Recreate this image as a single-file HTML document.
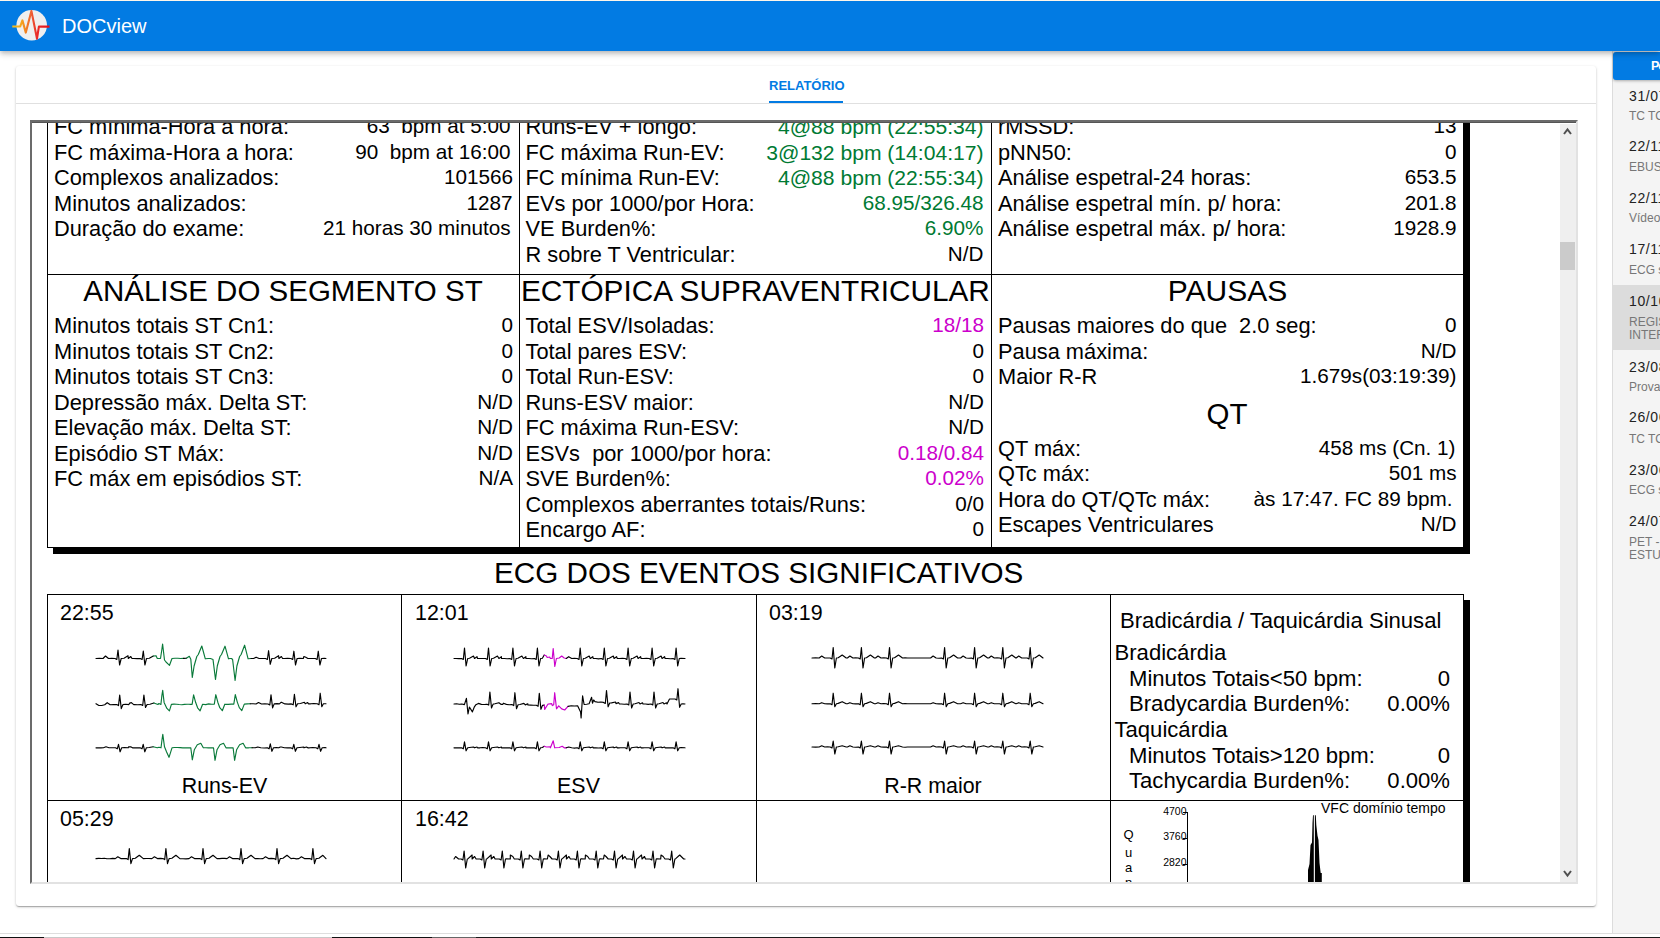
<!DOCTYPE html>
<html><head><meta charset="utf-8">
<style>
*{box-sizing:border-box}
html,body{margin:0;padding:0;width:1660px;height:938px;overflow:hidden;background:#fff;font-family:"Liberation Sans",sans-serif}
.abs{position:absolute}
#hdr{position:absolute;left:0;top:0;width:1660px;height:51px;background:#027be3;box-shadow:0 2px 4px -1px rgba(0,0,0,.16),0 4px 5px rgba(0,0,0,.11),0 1px 10px rgba(0,0,0,.1);z-index:5}
#hdr .topline{position:absolute;left:0;top:0;width:1660px;height:1px;background:#fdf6ea}
#brand{position:absolute;left:62px;top:15.5px;font-size:20px;line-height:1;color:#fff}
#card{position:absolute;left:16px;top:66px;width:1580px;height:840px;background:#fff;border-radius:3px;box-shadow:0 1px 3px rgba(0,0,0,.2),0 1px 1px rgba(0,0,0,.14),0 2px 1px -1px rgba(0,0,0,.12)}
#tabline{position:absolute;left:16px;top:103px;width:1580px;height:1px;background:#e0e0e0}
#tab{position:absolute;left:769px;top:79px;font-size:13px;font-weight:bold;line-height:1;color:#027be3;white-space:nowrap}
#tabul{position:absolute;left:769px;top:101px;width:74px;height:2px;background:#027be3}
#frame{position:absolute;left:30px;top:120px;width:1548px;height:764px;border:2px solid;border-color:#6b6b6b #e2e2e2 #e2e2e2 #6b6b6b;overflow:hidden;background:#fff}
#inner{position:absolute;left:-32px;top:-122px;width:1660px;height:938px}
.t{position:absolute;line-height:1;white-space:pre;color:#000}
.r{text-align:right}
.c{text-align:center}
.hl{position:absolute;background:#000}
#sb{position:absolute;left:1560px;top:124px;width:16px;height:758px;background:#efefef}
#thumb{position:absolute;left:1560px;top:242px;width:15px;height:28px;background:#cbcbcb}
#side{position:absolute;left:1612px;top:51px;width:48px;height:883px;background:#f4f4f4;border-left:1px solid #dcdcdc}
#sidehdr{position:absolute;left:1613px;top:52px;width:60px;height:28px;background:#027be3;border-radius:3px 0 0 3px;box-shadow:0 1px 3px rgba(0,0,0,.3)}
.sd{position:absolute;left:1629px;font-size:14px;line-height:1;color:#222;white-space:nowrap;letter-spacing:0.6px}
.ss{position:absolute;left:1629px;font-size:12px;line-height:1;color:#777;white-space:nowrap}
#bottomline{position:absolute;left:0;top:933px;width:1660px;height:1px;background:#dedede}
#taskbar{position:absolute;left:0;top:937px;width:1660px;height:1px;background:linear-gradient(to right,#111 0,#111 44px,#c8c8c8 44px,#c8c8c8 332px,#111 332px,#111 432px,#666 432px,#666 476px,#1a1a1a 476px,#1a1a1a 100%)}
</style></head><body>
<div id="hdr"><div class="topline"></div>
<svg class="abs" style="left:11px;top:9px" width="40" height="32" viewBox="11 9 40 32">
<defs><linearGradient id="lg" x1="12" y1="0" x2="50" y2="0" gradientUnits="userSpaceOnUse"><stop offset="0" stop-color="#f7c41a"/><stop offset="0.26" stop-color="#f5a21d"/><stop offset="0.37" stop-color="#f17f22"/><stop offset="0.5" stop-color="#ee6233"/><stop offset="0.66" stop-color="#ea2a28"/><stop offset="1" stop-color="#e3101b"/></linearGradient></defs>
<circle cx="31.7" cy="25.3" r="15.3" fill="#efefef"/>
<polyline points="12.3,26.5 20.2,26.5 22.4,20.4 25.8,32.6 31.4,10.9 37,38.7 38.9,26.6 49.5,26.6" fill="none" stroke="url(#lg)" stroke-width="2.1" stroke-linejoin="round"/>
</svg>
<div id="brand">DOCview</div>
</div>
<div id="card"></div>
<div id="tab">RELATÓRIO</div>
<div id="tabline"></div>
<div id="tabul"></div>
<div id="frame"><div id="inner">
<!-- table 1 -->
<div class="abs" style="left:47px;top:60px;width:1417px;height:488px;border:1px solid #000;box-shadow:6px 6px 0 0 #000"></div>
<div class="hl" style="left:519px;top:60px;width:1px;height:488px"></div>
<div class="hl" style="left:991px;top:60px;width:1px;height:488px"></div>
<div class="hl" style="left:47px;top:274px;width:1417px;height:1px"></div>
<!-- table 2 -->
<div class="abs" style="left:47px;top:594px;width:1417px;height:500px;border:1px solid #000;box-shadow:6px 6px 0 0 #000"></div>
<div class="hl" style="left:401px;top:594px;width:1px;height:500px"></div>
<div class="hl" style="left:756px;top:594px;width:1px;height:500px"></div>
<div class="hl" style="left:1110px;top:594px;width:1px;height:500px"></div>
<div class="hl" style="left:47px;top:800px;width:1417px;height:1px"></div>
<div class="t" style="left:54px;top:116px;font-size:21.8px;">FC mínima-Hora a hora:</div>
<div class="t r" style="right:1149.5px;top:116px;font-size:20.7px;">63  bpm at 5:00</div>
<div class="t" style="left:54px;top:141.5px;font-size:21.8px;">FC máxima-Hora a hora:</div>
<div class="t r" style="right:1149.5px;top:141.5px;font-size:20.7px;">90  bpm at 16:00</div>
<div class="t" style="left:54px;top:167px;font-size:21.8px;">Complexos analizados:</div>
<div class="t r" style="right:1147px;top:167px;font-size:20.7px;">101566</div>
<div class="t" style="left:54px;top:192.5px;font-size:21.8px;">Minutos analizados:</div>
<div class="t r" style="right:1147.5px;top:192.5px;font-size:20.7px;">1287</div>
<div class="t" style="left:54px;top:218px;font-size:21.8px;">Duração do exame:</div>
<div class="t r" style="right:1149.5px;top:218px;font-size:20.7px;">21 horas 30 minutos</div>
<div class="t" style="left:525.5px;top:116px;font-size:21.8px;">Runs-EV + longo:</div>
<div class="t r" style="right:676.5px;top:116px;font-size:21.1px;color:#007a33;">4@88 bpm (22:55:34)</div>
<div class="t" style="left:525.5px;top:141.5px;font-size:21.8px;">FC máxima Run-EV:</div>
<div class="t r" style="right:676.5px;top:141.5px;font-size:21.1px;color:#007a33;">3@132 bpm (14:04:17)</div>
<div class="t" style="left:525.5px;top:167px;font-size:21.8px;">FC mínima Run-EV:</div>
<div class="t r" style="right:676.5px;top:167px;font-size:21.1px;color:#007a33;">4@88 bpm (22:55:34)</div>
<div class="t" style="left:525.5px;top:192.5px;font-size:21.8px;">EVs por 1000/por Hora:</div>
<div class="t r" style="right:676.5px;top:192.5px;font-size:20.7px;color:#007a33;">68.95/326.48</div>
<div class="t" style="left:525.5px;top:218px;font-size:21.8px;">VE Burden%:</div>
<div class="t r" style="right:676.5px;top:218px;font-size:20.7px;color:#007a33;">6.90%</div>
<div class="t" style="left:525.5px;top:243.5px;font-size:21.8px;">R sobre T Ventricular:</div>
<div class="t r" style="right:676.5px;top:243.5px;font-size:20.7px;">N/D</div>
<div class="t" style="left:998px;top:116px;font-size:21.8px;">rMSSD:</div>
<div class="t r" style="right:203.5px;top:116px;font-size:20.7px;">13</div>
<div class="t" style="left:998px;top:141.5px;font-size:21.8px;">pNN50:</div>
<div class="t r" style="right:203.5px;top:141.5px;font-size:20.7px;">0</div>
<div class="t" style="left:998px;top:167px;font-size:21.8px;">Análise espetral-24 horas:</div>
<div class="t r" style="right:203.5px;top:167px;font-size:20.7px;">653.5</div>
<div class="t" style="left:998px;top:192.5px;font-size:21.8px;">Análise espetral mín. p/ hora:</div>
<div class="t r" style="right:203.5px;top:192.5px;font-size:20.7px;">201.8</div>
<div class="t" style="left:998px;top:218px;font-size:21.8px;">Análise espetral máx. p/ hora:</div>
<div class="t r" style="right:203.5px;top:218px;font-size:20.7px;">1928.9</div>
<div class="t c" style="left:-117px;width:800px;top:276px;font-size:29.5px">ANÁLISE DO SEGMENTO ST</div>
<div class="t c" style="left:355.4px;width:800px;top:276px;font-size:29.75px">ECTÓPICA SUPRAVENTRICULAR</div>
<div class="t c" style="left:827.5px;width:800px;top:276px;font-size:30px">PAUSAS</div>
<div class="t" style="left:54px;top:315.0px;font-size:21.8px;">Minutos totais ST Cn1:</div>
<div class="t r" style="right:1147px;top:315.0px;font-size:20.7px;">0</div>
<div class="t" style="left:54px;top:340.5px;font-size:21.8px;">Minutos totais ST Cn2:</div>
<div class="t r" style="right:1147px;top:340.5px;font-size:20.7px;">0</div>
<div class="t" style="left:54px;top:366.0px;font-size:21.8px;">Minutos totais ST Cn3:</div>
<div class="t r" style="right:1147px;top:366.0px;font-size:20.7px;">0</div>
<div class="t" style="left:54px;top:391.5px;font-size:21.8px;">Depressão máx. Delta ST:</div>
<div class="t r" style="right:1147px;top:391.5px;font-size:20.7px;">N/D</div>
<div class="t" style="left:54px;top:417.0px;font-size:21.8px;">Elevação máx. Delta ST:</div>
<div class="t r" style="right:1147px;top:417.0px;font-size:20.7px;">N/D</div>
<div class="t" style="left:54px;top:442.5px;font-size:21.8px;">Episódio ST Máx:</div>
<div class="t r" style="right:1147px;top:442.5px;font-size:20.7px;">N/D</div>
<div class="t" style="left:54px;top:468.0px;font-size:21.8px;">FC máx em episódios ST:</div>
<div class="t r" style="right:1147px;top:468.0px;font-size:20.7px;">N/A</div>
<div class="t" style="left:525.5px;top:315.0px;font-size:21.8px;">Total ESV/Isoladas:</div>
<div class="t r" style="right:676px;top:315.0px;font-size:20.7px;color:#cc00cc;">18/18</div>
<div class="t" style="left:525.5px;top:340.5px;font-size:21.8px;">Total pares ESV:</div>
<div class="t r" style="right:676px;top:340.5px;font-size:20.7px;">0</div>
<div class="t" style="left:525.5px;top:366.0px;font-size:21.8px;">Total Run-ESV:</div>
<div class="t r" style="right:676px;top:366.0px;font-size:20.7px;">0</div>
<div class="t" style="left:525.5px;top:391.5px;font-size:21.8px;">Runs-ESV maior:</div>
<div class="t r" style="right:676px;top:391.5px;font-size:20.7px;">N/D</div>
<div class="t" style="left:525.5px;top:417.0px;font-size:21.8px;">FC máxima Run-ESV:</div>
<div class="t r" style="right:676px;top:417.0px;font-size:20.7px;">N/D</div>
<div class="t" style="left:525.5px;top:442.5px;font-size:21.8px;">ESVs  por 1000/por hora:</div>
<div class="t r" style="right:676px;top:442.5px;font-size:20.7px;color:#cc00cc;">0.18/0.84</div>
<div class="t" style="left:525.5px;top:468.0px;font-size:21.8px;">SVE Burden%:</div>
<div class="t r" style="right:676px;top:468.0px;font-size:20.7px;color:#cc00cc;">0.02%</div>
<div class="t" style="left:525.5px;top:493.5px;font-size:21.8px;">Complexos aberrantes totais/Runs:</div>
<div class="t r" style="right:676px;top:493.5px;font-size:20.7px;">0/0</div>
<div class="t" style="left:525.5px;top:519.0px;font-size:21.8px;">Encargo AF:</div>
<div class="t r" style="right:676px;top:519.0px;font-size:20.7px;">0</div>
<div class="t" style="left:998px;top:315.0px;font-size:21.8px;">Pausas maiores do que  2.0 seg:</div>
<div class="t r" style="right:203.5px;top:315.0px;font-size:20.7px;">0</div>
<div class="t" style="left:998px;top:340.5px;font-size:21.8px;">Pausa máxima:</div>
<div class="t r" style="right:203.5px;top:340.5px;font-size:20.7px;">N/D</div>
<div class="t" style="left:998px;top:366.0px;font-size:21.8px;">Maior R-R</div>
<div class="t r" style="right:203.5px;top:366.0px;font-size:20.7px;">1.679s(03:19:39)</div>
<div class="t c" style="left:827px;width:800px;top:399px;font-size:29.5px">QT</div>
<div class="t" style="left:998px;top:437.5px;font-size:21.8px;">QT máx:</div>
<div class="t r" style="right:204.5px;top:437.5px;font-size:20.7px;">458 ms (Cn. 1)</div>
<div class="t" style="left:998px;top:463px;font-size:21.8px;">QTc máx:</div>
<div class="t r" style="right:203.5px;top:463px;font-size:20.7px;">501 ms</div>
<div class="t" style="left:998px;top:488.5px;font-size:21.8px;">Hora do QT/QTc máx:</div>
<div class="t r" style="right:207.5px;top:488.5px;font-size:20.7px;">às 17:47. FC 89 bpm.</div>
<div class="t" style="left:998px;top:514px;font-size:21.8px;">Escapes Ventriculares</div>
<div class="t r" style="right:203.5px;top:514px;font-size:20.7px;">N/D</div>
<div class="t c" style="left:358.65px;width:800px;top:558px;font-size:29.65px">ECG DOS EVENTOS SIGNIFICATIVOS</div>
<div class="t" style="left:60px;top:603px;font-size:21.4px;">22:55</div>
<div class="t" style="left:415px;top:603px;font-size:21.4px;">12:01</div>
<div class="t" style="left:769px;top:603px;font-size:21.4px;">03:19</div>
<div class="t" style="left:60px;top:809px;font-size:21.4px;">05:29</div>
<div class="t" style="left:415px;top:809px;font-size:21.4px;">16:42</div>
<div class="t c" style="left:-175.5px;width:800px;top:776px;font-size:21.4px">Runs-EV</div>
<div class="t c" style="left:178.5px;width:800px;top:776px;font-size:21.4px">ESV</div>
<div class="t c" style="left:533px;width:800px;top:776px;font-size:21.4px">R-R maior</div>
<div class="t" style="left:1120px;top:609.9px;font-size:22.1px;">Bradicárdia / Taquicárdia Sinusal</div>
<div class="t" style="left:1114.5px;top:641.9px;font-size:22.1px;">Bradicárdia</div>
<div class="t" style="left:1129px;top:667.8px;font-size:22.1px;">Minutos Totais&lt;50 bpm:</div>
<div class="t r" style="right:210px;top:667.8px;font-size:22.1px;">0</div>
<div class="t" style="left:1129px;top:692.8px;font-size:22.1px;">Bradycardia Burden%:</div>
<div class="t r" style="right:210px;top:692.8px;font-size:22.1px;">0.00%</div>
<div class="t" style="left:1114.5px;top:718.6px;font-size:22.1px;">Taquicárdia</div>
<div class="t" style="left:1129px;top:745.1px;font-size:22.1px;">Minutos Totais&gt;120 bpm:</div>
<div class="t r" style="right:210px;top:745.1px;font-size:22.1px;">0</div>
<div class="t" style="left:1129px;top:769.7px;font-size:22.1px;">Tachycardia Burden%:</div>
<div class="t r" style="right:210px;top:769.7px;font-size:22.1px;">0.00%</div>
<div class="t r" style="right:473.5px;top:805.7px;font-size:10.5px;">4700</div>
<div class="t r" style="right:473.5px;top:830.7px;font-size:10.5px;">3760</div>
<div class="t r" style="right:473.5px;top:856.7px;font-size:10.5px;">2820</div>
<div class="hl" style="left:1187px;top:812px;width:1px;height:80px"></div>
<div class="hl" style="left:1183px;top:812px;width:5px;height:1px"></div>
<div class="hl" style="left:1183px;top:838px;width:5px;height:1px"></div>
<div class="hl" style="left:1183px;top:864px;width:5px;height:1px"></div>
<div class="t c" style="left:728.5px;width:800px;top:827.8px;font-size:13px">Q</div>
<div class="t c" style="left:728.5px;width:800px;top:845.6px;font-size:13px">u</div>
<div class="t c" style="left:728.5px;width:800px;top:860.7px;font-size:13px">a</div>
<div class="t c" style="left:728.5px;width:800px;top:876px;font-size:13px">n</div>
<div class="t" style="left:1321px;top:800.9px;font-size:14px;">VFC domínio tempo</div>
<svg class="abs" style="left:0;top:0" width="1660" height="938"><polygon fill="#000" points="1308,890 1308,870 1309.5,864 1310.5,845 1312,842.6 1312.5,823 1313,815.2 1313.8,815.2 1313.8,890"/><polygon fill="#000" points="1314.9,890 1314.9,815.2 1315.8,815.2 1316.3,825 1317.5,835.8 1318.5,840 1319.5,863 1320.7,873 1321.8,873 1321.8,890"/></svg>
<svg class="abs" style="left:0;top:0" width="1660" height="938"><polyline points="96,658.5 99.5,658.4 103,658.5 105.5,656.0 108.5,658.5 111.8,658.3 115,658.5 116.8,659.5 118,650.0 119.6,665.0 121.2,658.5 124,658.2 128,655.7 128.3,658.5 130.8,656.5 132,658.5 133.8,658.5 137.1,658.6 140.3,658.5 142.1,659.5 143.3,651.0 144.9,665.0 146.5,658.5 149.3,658.2 153.3,656.0" fill="none" stroke="#000" stroke-width="1.15" stroke-linejoin="round" stroke-linecap="round"/><polyline points="153.3,656.0 156,655.7 157.3,658.5 158.5,658.5 160.5,658.5 162,648.5 162.6,644.0 164.5,660.0 166,662.0 169.5,665.3 172,658.5 175,658.2 177.9,658.2 180.7,658.5 183.6,658.4" fill="none" stroke="#0a7a3a" stroke-width="1.15" stroke-linejoin="round" stroke-linecap="round"/><polyline points="183.6,658.4 186.4,658.2" fill="none" stroke="#000" stroke-width="1.15" stroke-linejoin="round" stroke-linecap="round"/><polyline points="186.4,658.2 189.3,656.3 190.8,659.3 192.3,677.5 194.1,666.0 196.8,656.5 198.3,654.5 201.8,646.0 205.3,658.8 208.3,658.5 210.5,658.5 213.0,659.5 215.5,679.5 217.3,666.0 220.0,656.5 221.5,654.5 225.0,646.2 228.5,658.8 230.1,658.5 231.5,658.5 232.6,659.5 235.1,680.5 236.9,666.0 239.6,656.5 241.1,654.5 244.6,645.2 248.1,658.8 251.1,658.5" fill="none" stroke="#0a7a3a" stroke-width="1.15" stroke-linejoin="round" stroke-linecap="round"/><polyline points="251.1,658.5 253.6,658.5 256.1,657.2 259.1,658.5 262.4,658.5 265.6,658.5 267.4,659.5 268.6,650.7 270.2,664.3 271.8,658.5 274.6,658.2 278.6,655.7 278.9,658.5 281.4,656.5 282.6,658.5 284.4,658.5 287.6,658.2 290.9,658.5 292.7,659.5 293.9,651.2 295.5,665.0 297.1,658.5 299.9,658.2 303.3,658.5 303.9,656.5 305.8,657.3 307.9,658.5 308.8,658.5 312.1,658.5 315.3,658.5 317.1,659.5 318.3,651.2 319.9,665.0 321.5,658.5 324.3,658.2 326,658.5" fill="none" stroke="#000" stroke-width="1.15" stroke-linejoin="round" stroke-linecap="round"/><polyline points="96,703.7 98.9,705.5 101.8,705.5 104.7,704.7 107.2,702.7 110.2,704.7 113.5,704.6 116.7,704.6 118.5,705.6 119.7,695.1 121.3,708.6 122.9,704.6 125.7,704.3 128.9,704.6 129.7,703.1 131.4,702.6 133.7,704.6 134.4,704.6 137.7,704.8 140.9,704.5 142.7,705.5 143.9,695.0 145.5,707.5 147.1,704.5 149.9,704.2 153.9,703.0" fill="none" stroke="#000" stroke-width="1.15" stroke-linejoin="round" stroke-linecap="round"/><polyline points="153.9,703.0 157.9,704.5 158.9,703.5 160.9,704.4 161.9,695.4 162.7,690.4 164.1,702.4 166.9,708.4 169.4,710.9 171.4,704.4 174.0,704.1 176.6,704.2 179.2,704.5 181.8,704.7 184.4,704.4 187.0,704.2 189.6,704.3 192.1,704.3 193.6,694.8 195.6,702.3 197.6,707.8 200.1,710.8 202.6,704.3 205.7,704.6 208.7,703.9 211.8,704.2 214.3,704.2 215.8,694.7 217.8,702.2 219.8,707.7 222.3,710.7 224.8,704.2 228.1,704.4 231.3,704.1 233.8,704.1 235.3,694.6 237.3,702.1 239.3,707.6 241.8,710.6 244.3,704.1 247.2,703.9 250.2,703.8" fill="none" stroke="#0a7a3a" stroke-width="1.15" stroke-linejoin="round" stroke-linecap="round"/><polyline points="250.2,703.8 253.1,703.7 256,704.0 258.5,702.5 261.5,704.0 264.8,703.8 268,704.0 269.8,705.0 271,694.9 272.6,707.9 274.2,703.9 277,703.6 279.4,703.9 281,702.4 281.9,702.4 284.9,703.9 285,703.9 288.2,704.1 291.4,703.9 293.2,704.8 294.4,694.3 296.0,706.8 297.6,703.8 300.4,703.5 304.4,702.3 305.2,703.8 307.7,702.6 308.4,703.8 310.7,703.8 313.9,703.5 317.2,703.7 319.0,704.7 320.2,693.2 321.8,706.7 323.4,703.7 326,703.7" fill="none" stroke="#000" stroke-width="1.15" stroke-linejoin="round" stroke-linecap="round"/><polyline points="96,747.8 98.5,747.8 101.0,747.9 103.5,747.8 106.0,746.8 109.0,747.8 112.2,747.7 115.5,747.8 117.3,748.8 118.5,744.3 120.1,751.8 121.7,747.8 124.5,747.5 128.2,747.8 128.5,746.8 130.7,746.8 132.5,747.8 133.7,747.8 136.9,747.8 140.2,747.8 142.0,748.8 143.2,744.3 144.8,751.8 146.4,747.8 149.2,747.5 153.2,746.8" fill="none" stroke="#000" stroke-width="1.15" stroke-linejoin="round" stroke-linecap="round"/><polyline points="153.2,746.8 157.2,747.8 159,747.3 161,747.8 162,739.8 162.8,734.3 164.5,746.8 166.5,751.8 169,757.3 172,747.8 174.7,747.5 177.4,747.5 180.2,747.6 182.9,747.9 185.6,747.8 188.3,747.8 190.8,747.8 192.3,759.8 194.3,749.8 197.3,744.8 200.8,743.3 203.3,747.8 205.9,747.7 208.4,747.9 211,747.8 213.5,747.8 215,760.3 217,749.8 220,744.8 223.5,743.3 226,747.8 230.6,747.8 233.1,747.8 234.6,760.3 236.6,749.8 239.6,744.8 243.1,743.3 245.6,747.8 248.8,747.8 252.1,747.7" fill="none" stroke="#0a7a3a" stroke-width="1.15" stroke-linejoin="round" stroke-linecap="round"/><polyline points="252.1,747.7 255.3,747.8 257.8,747.0 260.8,747.8 264.1,748.0 267.3,747.8 269.1,748.8 270.3,743.8 271.9,751.3 273.5,747.8 276.3,747.5 278.8,747.8 280.3,747.0 281.3,747.0 284.3,747.8 284.3,747.8 287.6,747.9 290.8,747.8 292.6,748.8 293.8,744.3 295.4,751.3 297.0,747.8 299.8,747.5 303.8,747.0 304,747.8 306.5,747.0 307.8,747.8 309.5,747.8 312.8,747.6 316,747.8 317.8,748.8 319,744.3 320.6,751.3 322.2,747.8 325,747.5 326,747.8" fill="none" stroke="#000" stroke-width="1.15" stroke-linejoin="round" stroke-linecap="round"/><polyline points="454,658.5 456.0,658.5 458.8,658.6 461.5,658.5 463.3,659.5 464.5,648.0 466.1,666.0 467.7,658.5 469.5,658.2 473.5,656.0 474.5,658.5 477.0,656.7 477.5,658.5 480.0,658.5 482.8,658.5 485.5,658.5 487.3,659.5 488.5,648.0 490.1,666.0 491.7,658.5 493.5,658.2 497.5,656.0 498.9,658.5 501.4,656.7 501.5,658.5 504.4,658.5 507.1,658.8 509.9,658.5 511.7,659.5 512.9,648.0 514.5,666.0 516.1,658.5 517.9,658.2 521.9,656.0 523.4,658.5 525.9,656.7 525.9,658.5 528.9,658.5 531.6,658.7 534.4,658.5 536.2,659.5 537.4,648.0 539.0,666.0 540.6,658.5 542.4,658.2 544.2,655.0" fill="none" stroke="#000" stroke-width="1.15" stroke-linejoin="round" stroke-linecap="round"/><polyline points="544.2,655.0 546.4,656.0 547.2,657.5 549.7,657.0 550.4,658.5 552.2,658.5 553.2,648.5 554.8,666.5 556.4,658.5 559.2,658.0 561.7,656.0 564.2,658.0 566.2,658.5" fill="none" stroke="#cc00cc" stroke-width="1.15" stroke-linejoin="round" stroke-linecap="round"/><polyline points="566.2,658.5 568.7,656.7 571.7,658.5 574.5,658.3 577.2,658.5 579.0,659.5 580.2,648.0 581.8,666.0 583.4,658.5 585.2,658.2 589.2,656.0 590.3,658.5 592.8,656.7 593.2,658.5 595.8,658.5 598.5,658.9 601.3,658.5 603.1,659.5 604.3,648.0 605.9,666.0 607.5,658.5 609.3,658.2 613.3,656.0 614.1,658.5 616.6,656.7 617.3,658.5 619.6,658.5 622.4,658.2 625.1,658.5 626.9,659.5 628.1,648.0 629.7,666.0 631.3,658.5 633.1,658.2 637.1,656.0 638.1,658.5 640.6,656.7 641.1,658.5 643.6,658.5 646.4,658.4 649.1,658.5 650.9,659.5 652.1,648.0 653.7,666.0 655.3,658.5 657.1,658.2 661.1,656.0 662.1,658.5 664.6,656.7 665.1,658.5 667.6,658.5 670.4,658.7 673.1,658.5 674.9,659.5 676.1,648.0 677.7,666.0 679.3,658.5 681.1,658.2 685,658.5" fill="none" stroke="#000" stroke-width="1.15" stroke-linejoin="round" stroke-linecap="round"/><polyline points="454,704 456.6,703.8 459.2,704.3 461.8,704.0 464.4,704.6 466.4,698.3 468.0,713.9 469.4,707.0 472.4,711.9 474.4,706.8 475.9,704.7 478.4,703.4 481.4,704.4 484.1,704.5 486.9,704.2 488.7,705.1 489.9,692.0 491.5,708.0 493.1,704.1 494.9,703.8 498.9,702.7 500.9,704.3 502.9,704.3 503.4,703.2 506.4,704.4 509.1,704.8 511.9,704.6 513.7,705.6 514.9,692.7 516.5,708.7 518.1,704.7 519.9,704.5 523.9,703.4 525.3,704.9 527.8,703.8 527.9,705.0 530.8,705.1 533.5,705.2 536.3,705.2 538.1,706.3 539.3,693.3 540.9,709.3 542.5,705.4 544.3,705.1" fill="none" stroke="#000" stroke-width="1.15" stroke-linejoin="round" stroke-linecap="round"/><polyline points="544.3,705.1 544.7,709.4 547.7,704.5 548.3,704.0 551.7,703.6 552.3,705.6 553.7,704.7 554.7,692.7 556.5,708.8 558.7,705.8 561.7,708.9 564.7,710.0 568.0,706.4" fill="none" stroke="#cc00cc" stroke-width="1.15" stroke-linejoin="round" stroke-linecap="round"/><polyline points="568.0,706.4 571.3,705.8 574.6,706.0 577.6,705.8 580.6,712.1 581.1,718.0 582.6,695.8 584.1,704.5 586.6,704.2 589.1,703.8 591.6,697.3 592.5,703.2 593.6,700.0 595.0,701.6 598.0,702.3 600.8,702.0 603.5,702.4 605.3,703.5 606.5,690.6 608.1,706.8 609.7,703.0 611.5,702.9 615.5,702.0 616,703.6 618.5,702.6 619.5,704.0 621.5,704.0 624.2,704.3 627,704.0 628.8,705.0 630,692.0 631.6,708.0 633.2,704.0 635,703.7 639,702.5 640,704.0 642.5,702.8 643,704.0 645.5,704.0 648.2,704.4 651,704.0 652.8,705.0 654,692.0 655.6,708.0 657.2,704.0 659,703.7 663,702.5 664,704.0 666.5,702.8 667,704.0 669.5,699.0 672.2,699.0 675,699.0 676.8,700.0 678,688.7 679.6,707.3 681.2,704.0 683,703.7 685,704.0" fill="none" stroke="#000" stroke-width="1.15" stroke-linejoin="round" stroke-linecap="round"/><polyline points="454,747.8 456.0,747.8 458.8,747.9 461.5,747.8 463.3,748.8 464.5,741.8 466.1,750.8 467.7,747.8 469.5,747.5 473.5,747.0 474.5,747.8 477.0,747.0 477.5,747.8 480.0,747.8 482.8,747.5 485.5,747.8 487.3,748.8 488.5,741.8 490.1,750.8 491.7,747.8 493.5,747.5 497.5,747.0 498.9,747.8 501.4,747.0 501.5,747.8 504.4,747.8 507.1,747.9 509.9,747.8 511.7,748.8 512.9,741.8 514.5,750.8 516.1,747.8 517.9,747.5 521.9,747.0 523.4,747.8 525.9,747.0 525.9,747.8 528.9,747.8 531.6,747.9 534.4,747.8 536.2,748.8 537.4,741.8 539.0,750.8 540.6,747.8 542.4,747.5 544.2,746.3" fill="none" stroke="#000" stroke-width="1.15" stroke-linejoin="round" stroke-linecap="round"/><polyline points="544.2,746.3 546.4,747.0 550.2,746.8 550.4,747.8 553.2,740.8 554.7,747.8 559.2,747.5 562.2,746.3 564.2,747.8 566.2,747.8" fill="none" stroke="#cc00cc" stroke-width="1.15" stroke-linejoin="round" stroke-linecap="round"/><polyline points="566.2,747.8 568.7,747.0 571.7,747.8 574.5,748.1 577.2,747.8 579.0,748.8 580.2,741.8 581.8,750.8 583.4,747.8 585.2,747.5 589.2,747.0 590.3,747.8 592.8,747.0 593.2,747.8 595.8,747.8 598.5,748.0 601.3,747.8 603.1,748.8 604.3,741.8 605.9,750.8 607.5,747.8 609.3,747.5 613.3,747.0 614.1,747.8 616.6,747.0 617.3,747.8 619.6,747.8 622.4,747.7 625.1,747.8 626.9,748.8 628.1,741.8 629.7,750.8 631.3,747.8 633.1,747.5 637.1,747.0 638.1,747.8 640.6,747.0 641.1,747.8 643.6,747.8 646.4,747.7 649.1,747.8 650.9,748.8 652.1,741.8 653.7,750.8 655.3,747.8 657.1,747.5 661.1,747.0 662.1,747.8 664.6,747.0 665.1,747.8 667.6,747.8 670.4,747.9 673.1,747.8 674.9,748.8 676.1,741.8 677.7,750.8 679.3,747.8 681.1,747.5 685,747.8" fill="none" stroke="#000" stroke-width="1.15" stroke-linejoin="round" stroke-linecap="round"/><polyline points="812,658 815.6,657.8 819.2,658 821.7,656 824.7,658 827.5,658.0 830.2,658 832.0,659.0 833.2,647.5 834.8,668 836.4,658 838.2,657.7 842.2,655 846.2,658 847.4,658 849.9,656 852.9,658 855.6,657.8 858.4,658 860.2,659.0 861.4,647.5 863.0,668 864.6,658 866.4,657.7 870.4,655 874.4,658 875.5,658 878.0,656 881.0,658 883.8,657.8 886.5,658 888.3,659.0 889.5,647.5 891.1,668 892.7,658 894.5,657.7 898.5,655 902.5,658 905.1,657.8 907.6,658 910.2,658 912.7,658 915.3,658 917.8,658 920.4,658 922.9,658 925.5,658 928.0,658 930.6,658 933.1,656 936.1,658 938.9,658.2 941.6,658 943.4,659.0 944.6,647.5 946.2,668 947.8,658 949.6,657.7 953.6,655 957.6,658 960.6,658 963.1,656 966.1,658 968.9,658.2 971.6,658 973.4,659.0 974.6,647.5 976.2,668 977.8,658 979.6,657.7 983.6,655 987.6,658 988.8,658 991.3,656 994.3,658 997.0,657.9 999.8,658 1001.6,659.0 1002.8,647.5 1004.4,668 1006.0,658 1007.8,657.7 1011.8,655 1015.8,658 1016.2,658 1018.7,656 1021.7,658 1024.5,658.0 1027.2,658 1029.0,659.0 1030.2,647.5 1031.8,668 1033.4,658 1035.2,657.7 1039.2,655 1043,658" fill="none" stroke="#000" stroke-width="1.15" stroke-linejoin="round" stroke-linecap="round"/><polyline points="812,703.7 815.6,703.6 819.2,703.7 821.7,702.7 824.7,703.7 827.5,703.9 830.2,703.7 832.0,704.7 833.2,693.2 834.8,706.7 836.4,703.7 838.2,703.4 842.2,701.7 846.2,703.7 847.4,703.7 849.9,702.7 852.9,703.7 855.6,703.9 858.4,703.7 860.2,704.7 861.4,693.2 863.0,706.7 864.6,703.7 866.4,703.4 870.4,701.7 874.4,703.7 875.5,703.7 878.0,702.7 881.0,703.7 883.8,703.5 886.5,703.7 888.3,704.7 889.5,693.2 891.1,706.7 892.7,703.7 894.5,703.4 898.5,701.7 902.5,703.7 905.1,703.5 907.6,703.7 910.2,703.7 912.7,703.7 915.3,703.7 917.8,703.7 920.4,703.7 922.9,703.7 925.5,703.7 928.0,703.7 930.6,703.7 933.1,702.7 936.1,703.7 938.9,703.9 941.6,703.7 943.4,704.7 944.6,693.2 946.2,706.7 947.8,703.7 949.6,703.4 953.6,701.7 957.6,703.7 960.6,703.7 963.1,702.7 966.1,703.7 968.9,703.8 971.6,703.7 973.4,704.7 974.6,693.2 976.2,706.7 977.8,703.7 979.6,703.4 983.6,701.7 987.6,703.7 988.8,703.7 991.3,702.7 994.3,703.7 997.0,703.7 999.8,703.7 1001.6,704.7 1002.8,693.2 1004.4,706.7 1006.0,703.7 1007.8,703.4 1011.8,701.7 1015.8,703.7 1016.2,703.7 1018.7,702.7 1021.7,703.7 1024.5,703.8 1027.2,703.7 1029.0,704.7 1030.2,693.2 1031.8,706.7 1033.4,703.7 1035.2,703.4 1039.2,701.7 1043,703.7" fill="none" stroke="#000" stroke-width="1.15" stroke-linejoin="round" stroke-linecap="round"/><polyline points="812,747 815.6,747.1 819.2,747 821.7,745.8 824.7,747 827.5,746.8 830.2,747 832.0,748.0 833.2,741 834.8,754 836.4,747 838.2,746.7 842.2,745.8 846.2,747 847.4,747 849.9,745.8 852.9,747 855.6,747.2 858.4,747 860.2,748.0 861.4,741 863.0,754 864.6,747 866.4,746.7 870.4,745.8 874.4,747 875.5,747 878.0,745.8 881.0,747 883.8,747.1 886.5,747 888.3,748.0 889.5,741 891.1,754 892.7,747 894.5,746.7 898.5,745.8 902.5,747 905.1,747.2 907.6,747 910.2,747 912.7,747 915.3,747 917.8,747 920.4,747 922.9,747 925.5,747 928.0,747 930.6,747 933.1,745.8 936.1,747 938.9,746.9 941.6,747 943.4,748.0 944.6,741 946.2,754 947.8,747 949.6,746.7 953.6,745.8 957.6,747 960.6,747 963.1,745.8 966.1,747 968.9,746.8 971.6,747 973.4,748.0 974.6,741 976.2,754 977.8,747 979.6,746.7 983.6,745.8 987.6,747 988.8,747 991.3,745.8 994.3,747 997.0,746.8 999.8,747 1001.6,748.0 1002.8,741 1004.4,754 1006.0,747 1007.8,746.7 1011.8,745.8 1015.8,747 1016.2,747 1018.7,745.8 1021.7,747 1024.5,746.8 1027.2,747 1029.0,748.0 1030.2,741 1031.8,754 1033.4,747 1035.2,746.7 1039.2,745.8 1043,747" fill="none" stroke="#000" stroke-width="1.15" stroke-linejoin="round" stroke-linecap="round"/><polyline points="96,858.6 98.8,858.4 101.5,858.5 104.3,858.3 107.0,858.8 109.8,858.7 112.5,858.4 115.3,858.6 117.8,856.8 120.8,858.6 123.6,858.5 126.3,858.6 128.1,859.6 129.3,848.6 130.9,863.6 132.5,858.6 135.3,858.3 139.3,855.3 143.3,858.6 146.2,858.5 149.0,858.5 151.9,858.6 154.4,856.8 157.4,858.6 160.2,858.4 162.9,858.6 164.7,859.6 165.9,848.6 167.5,863.6 169.1,858.6 171.9,858.3 175.9,855.3 179.9,858.6 182.9,858.8 186.0,858.9 189,858.6 191.5,856.8 194.5,858.6 197.2,858.6 200,858.6 201.8,859.6 203,848.6 204.6,863.6 206.2,858.6 209,858.3 213,855.3 217,858.6 219.5,858.6 222.0,858.4 224.5,858.4 227,858.6 229.5,856.8 232.5,858.6 235.2,858.5 238,858.6 239.8,859.6 241,848.6 242.6,863.6 244.2,858.6 247,858.3 251,855.3 255,858.6 257.7,858.5 260.3,858.8 263,858.6 265.5,856.8 268.5,858.6 271.2,858.4 274,858.6 275.8,859.6 277,848.6 278.6,863.6 280.2,858.6 283,858.3 287,855.3 291,858.6 293.6,858.3 296.3,858.9 298.9,858.6 301.4,856.8 304.4,858.6 307.1,858.6 309.9,858.6 311.7,859.6 312.9,848.6 314.5,863.6 316.1,858.6 318.9,858.3 322.9,855.3 326,858.6" fill="none" stroke="#000" stroke-width="1.15" stroke-linejoin="round" stroke-linecap="round"/><polyline points="454,859 455.6,856.5 458.6,859 461.1,859 462.9,860.0 464.1,851 465.7,868 467.3,859 468.1,858.7 472.1,855 472.1,859 474.6,856.5 476.1,859 477.6,859 480.1,859 481.9,860.0 483.1,851 484.7,868 486.3,859 487.1,858.7 491.1,855 491.3,859 493.8,856.5 495.1,859 496.8,859 499.3,859 501.1,860.0 502.3,851 503.9,868 505.5,859 506.3,858.7 510.3,859 510.3,855 512.8,856.5 514.3,859 515.8,859 518.3,859 520.1,860.0 521.3,851 522.9,868 524.5,859 525.3,858.7 529.1,859 529.3,855 531.6,856.5 533.3,859 534.6,859 537.1,859 538.9,860.0 540.1,851 541.7,868 543.3,859 544.1,858.7 547.4,859 548.1,855 549.9,856.5 552.1,859 552.9,859 555.4,859 557.2,860.0 558.4,851 560.0,868 561.6,859 562.4,858.7 566.4,855 566.4,859 568.9,856.5 570.4,859 571.9,859 574.4,859 576.2,860.0 577.4,851 579.0,868 580.6,859 581.4,858.7 585.2,859 585.4,855 587.7,856.5 589.4,859 590.7,859 593.2,859 595.0,860.0 596.2,851 597.8,868 599.4,859 600.2,858.7 603.5,859 604.2,855 606.0,856.5 608.2,859 609.0,859 611.5,859 613.3,860.0 614.5,851 616.1,868 617.7,859 618.5,858.7 622.5,855 622.5,859 625.0,856.5 626.5,859 628.0,859 630.5,859 632.3,860.0 633.5,851 635.1,868 636.7,859 637.5,858.7 641.5,855 642,859 644.5,856.5 645.5,859 647.5,859 650,859 651.8,860.0 653,851 654.6,868 656.2,859 657,858.7 660.7,859 661,855 663.2,856.5 665,859 666.2,859 668.7,859 670.5,860.0 671.7,851 673.3,868 674.9,859 675.7,858.7 679.7,855 683.7,859 685,859" fill="none" stroke="#000" stroke-width="1.15" stroke-linejoin="round" stroke-linecap="round"/></svg>
<div class="abs" style="left:32px;top:122px;width:1544px;height:1px;background:#555"></div>
</div></div>
<div id="sb"></div><div id="thumb"></div>
<svg class="abs" style="left:1559px;top:122px" width="17" height="760">
<polyline points="5,12 8.5,7.5 12,12" fill="none" stroke="#505050" stroke-width="2"/>
<polyline points="5,749 8.5,753.5 12,749" fill="none" stroke="#505050" stroke-width="2"/>
</svg>
<div id="side"></div>
<div id="sidehdr"></div>
<div class="abs" style="left:1651px;top:60px;font-size:12.5px;font-weight:bold;color:#fff;line-height:1;letter-spacing:-1.2px">Pe</div>
<div class="abs" style="left:1613px;top:285px;width:47px;height:65px;background:#dcdcdc"></div>
<div class="sd" style="top:88.5px">31/07/2019</div>
<div class="ss" style="top:110.2px">TC TORAX</div>
<div class="sd" style="top:139px">22/11/2018</div>
<div class="ss" style="top:160.8px">EBUS</div>
<div class="sd" style="top:190.7px">22/11/2018</div>
<div class="ss" style="top:211.5px">Vídeo</div>
<div class="sd" style="top:242.2px">17/11/2018</div>
<div class="ss" style="top:263.9px">ECG s</div>
<div class="sd" style="top:293.8px">10/10/2018</div>
<div class="ss" style="top:315.5px">REGISTO</div>
<div class="ss" style="top:328.7px">INTERP</div>
<div class="sd" style="top:359.6px">23/08/2018</div>
<div class="ss" style="top:381.3px">Prova</div>
<div class="sd" style="top:410.2px">26/06/2018</div>
<div class="ss" style="top:432.8px">TC TORAX</div>
<div class="sd" style="top:462.7px">23/06/2018</div>
<div class="ss" style="top:483.8px">ECG s</div>
<div class="sd" style="top:514.3px">24/07/2018</div>
<div class="ss" style="top:535.6px">PET - </div>
<div class="ss" style="top:549.2px">ESTUDO</div>
<div id="bottomline"></div>
<div id="taskbar"></div>
</body></html>
